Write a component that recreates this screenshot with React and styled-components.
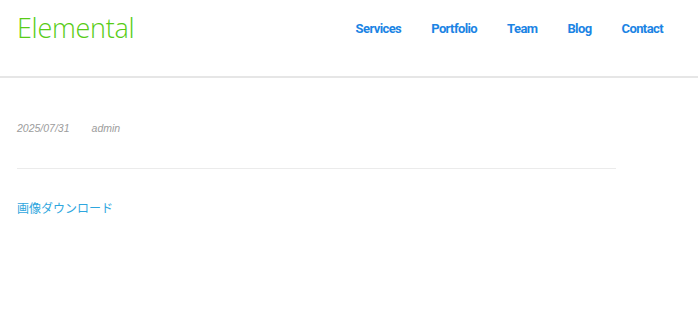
import React from 'react'
import styled, { createGlobalStyle } from 'styled-components'

const GlobalStyle = createGlobalStyle`
    body {
        margin: 0;
        background: #fff;
        font-family: "Liberation Sans", Arial, sans-serif;
    }
`

const links = ['Services', 'Portfolio', 'Team', 'Blog', 'Contact']

function App() {
    return (
        <>
            <GlobalStyle />
            <Header>
                <Logo href="#">Elemental</Logo>
                <Nav>
                    {links.map(l => <a key={l} href="#">{l}</a>)}
                </Nav>
            </Header>
            <Main>
                <Meta>
                    <span>2025/07/31</span>
                    <span>admin</span>
                </Meta>
                <Divider />
                <Download href="#">画像ダウンロード</Download>
            </Main>
        </>
    )
}

export default App

const Header = styled.header`
    display: flex;
    justify-content: space-between;
    align-items: center;
    height: 56px;
    padding: 0 20px 20px 17px;
    border-bottom: 2px solid #e6e6e6;
`

const Logo = styled.a`
    font-family: "Open Sans", sans-serif;
    font-weight: 300;
    font-size: 27px;
    color: #58cc16;
    text-decoration: none;
    margin-top: -2px;
    letter-spacing: -0.3px;
`

const Nav = styled.nav`
    display: flex;
    align-items: center;
    a {
        font-family: Roboto, sans-serif;
        font-weight: 700;
        font-size: 13px;
        letter-spacing: -0.6px;
        color: #1b84e4;
        text-decoration: none;
        padding: 0 15px;
    }
`

const Main = styled.main`
    width: 599px;
    padding: 0 17px;
`

const Meta = styled.div`
    display: flex;
    gap: 22px;
    margin-top: 44px;
    font-size: 10.5px;
    font-style: italic;
    color: #9c9c9c;
`

const Divider = styled.hr`
    border: none;
    border-top: 1px solid #ebebeb;
    margin: 34px 0 0;
`

const Download = styled.a`
    display: inline-block;
    margin-top: 30px;
    font-family: "Noto Sans CJK JP", sans-serif;
    font-size: 12px;
    color: #2ea6de;
    text-decoration: none;
`
